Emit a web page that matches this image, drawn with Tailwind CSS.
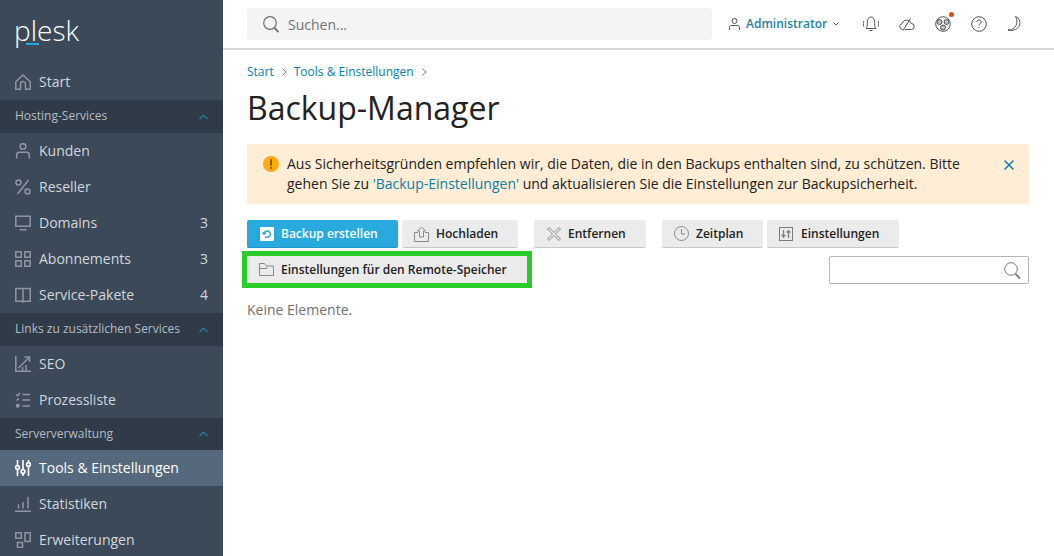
<!DOCTYPE html>
<html lang="de">
<head>
  <meta charset="UTF-8">
  <title>Backup-Manager</title>
  <script src="https://cdn.jsdelivr.net/npm/@tailwindcss/browser@4"></script>
</head>
<body class="font-['Open_Sans',sans-serif] text-[#222] bg-white">
  <div class="flex h-[556px] w-[1054px] overflow-hidden">

    <!-- sidebar -->
    <aside class="w-[223px] shrink-0 bg-[#3b4959] text-[#d3d7dc] text-[14px]">
      <div class="h-[64px] pl-[14px] relative">
        <span class="absolute left-[14px] top-[11px] text-[28px] leading-[38px] font-light text-white">plesk</span>
        <span class="absolute left-[26px] top-[43px] w-[13px] h-[2px] bg-[#28aade]"></span>
      </div>

      <div class="h-[36px] pl-[15px] pr-[15px] flex items-center gap-[8px]">
        <svg class="w-[16px] h-[16px] text-[#8d98a4]" viewBox="0 0 16 16" fill="none" stroke="currentColor" stroke-width="1.500"><path d="M.8 7.800 8 1l7.200 6.800V15.300H10.500V10a2.500 2.500 0 0 0-5 0v5.300H.8z"/></svg>
        <span class="pb-[2px]">Start</span>
      </div>

      <div class="h-[33px] pl-[15px] pr-[15px] flex items-center justify-between bg-[#2f3b48] text-[12px] text-[#b5bcc4]">
        <span class="pb-[2px]">Hosting-Services</span>
        <svg class="w-[9px] h-[6px] text-[#28aade]" viewBox="0 0 9 6" fill="none" stroke="currentColor"><path d="M.5 5 4.500 1l4 4"/></svg>
      </div>

      <div class="h-[36px] pl-[15px] pr-[15px] flex items-center gap-[8px]">
        <svg class="w-[16px] h-[16px] text-[#8d98a4]" viewBox="0 0 16 16" fill="none" stroke="currentColor" stroke-width="1.500"><circle cx="8" cy="3.500" r="2.800"/><path d="M1.700 15.500V12c0-1.500 1-2.700 2.800-2.700h7c1.800 0 2.800 1.200 2.800 2.700v3.500"/></svg>
        <span class="pb-[2px]">Kunden</span>
      </div>
      <div class="h-[36px] pl-[15px] pr-[15px] flex items-center gap-[8px]">
        <svg class="w-[16px] h-[16px] text-[#8d98a4]" viewBox="0 0 16 16" fill="none" stroke="currentColor" stroke-width="1.500"><circle cx="3.500" cy="3.500" r="2.500"/><circle cx="12.500" cy="12.500" r="2.500"/><path d="M13.500 1 2.500 15"/></svg>
        <span class="pb-[2px]">Reseller</span>
      </div>
      <div class="h-[36px] pl-[15px] pr-[15px] flex items-center gap-[8px]">
        <svg class="w-[16px] h-[16px] text-[#8d98a4]" viewBox="0 0 16 16" fill="none" stroke="currentColor" stroke-width="1.500"><rect x=".8" y="1.200" width="14.400" height="10"/><path d="M4.500 14.800h7"/></svg>
        <span class="flex-1 pb-[2px]">Domains</span><span class="pb-[2px]">3</span>
      </div>
      <div class="h-[36px] pl-[15px] pr-[15px] flex items-center gap-[8px]">
        <svg class="w-[16px] h-[16px] text-[#8d98a4]" viewBox="0 0 16 16" fill="none" stroke="currentColor" stroke-width="1.500"><rect x=".8" y=".8" width="5.400" height="5.400"/><rect x="9.800" y=".8" width="5.400" height="5.400"/><rect x=".8" y="9.800" width="5.400" height="5.400"/><rect x="9.800" y="9.800" width="5.400" height="5.400"/></svg>
        <span class="flex-1 pb-[2px]">Abonnements</span><span class="pb-[2px]">3</span>
      </div>
      <div class="h-[36px] pl-[15px] pr-[15px] flex items-center gap-[8px]">
        <svg class="w-[16px] h-[16px] text-[#8d98a4]" viewBox="0 0 16 16" fill="none" stroke="currentColor" stroke-width="1.500"><path d="M8 1.500H.8v12.800H8zM8 1.500h7.200v12.800H8zM8 14.300v1.500"/></svg>
        <span class="flex-1 pb-[2px]">Service-Pakete</span><span class="pb-[2px]">4</span>
      </div>

      <div class="h-[33px] pl-[15px] pr-[15px] flex items-center justify-between bg-[#2f3b48] text-[12px] text-[#b5bcc4]">
        <span class="pb-[2px]">Links zu zusätzlichen Services</span>
        <svg class="w-[9px] h-[6px] text-[#28aade]" viewBox="0 0 9 6" fill="none" stroke="currentColor"><path d="M.5 5 4.500 1l4 4"/></svg>
      </div>

      <div class="h-[36px] pl-[15px] pr-[15px] flex items-center gap-[8px]">
        <svg class="w-[16px] h-[16px] text-[#8d98a4]" viewBox="0 0 16 16" fill="none" stroke="currentColor" stroke-width="1.500"><path d="M.8 0v15.200H16M3.500 12 14 1.500M9.500 1H14.500V6M7.500 15v-4M11 15v-6"/></svg>
        <span class="pb-[2px]">SEO</span>
      </div>
      <div class="h-[36px] pl-[15px] pr-[15px] flex items-center gap-[8px]">
        <svg class="w-[16px] h-[16px] text-[#8d98a4]" viewBox="0 0 16 16" fill="none" stroke="currentColor" stroke-width="1.500"><path d="m1 2.500 1.500 1.300L5 1M7.500 2.500H15M7.500 8H15M7.500 14H15M1.500 8.500 4 6.500"/><circle cx="2.800" cy="13.800" r="1.300" fill="currentColor"/></svg>
        <span class="pb-[2px]">Prozessliste</span>
      </div>

      <div class="h-[32px] pl-[15px] pr-[15px] flex items-center justify-between bg-[#2f3b48] text-[12px] text-[#b5bcc4]">
        <span>Serververwaltung</span>
        <svg class="w-[9px] h-[6px] text-[#28aade]" viewBox="0 0 9 6" fill="none" stroke="currentColor"><path d="M.5 5 4.500 1l4 4"/></svg>
      </div>

      <div class="h-[36px] pl-[15px] pr-[15px] flex items-center gap-[8px] bg-[#56697c] text-white">
        <svg class="w-[16px] h-[16px]" viewBox="0 0 16 16" fill="none" stroke="currentColor" stroke-width="1.600"><path d="M2.500 0v5M2.500 10v6M8 0v9M8 14v2M13.500 0v2M13.500 7v9"/><circle cx="2.500" cy="7.500" r="1.900"/><circle cx="8" cy="11.500" r="1.900"/><circle cx="13.500" cy="4.500" r="1.900"/></svg>
        <span class="pb-[2px]">Tools &amp; Einstellungen</span>
      </div>
      <div class="h-[36px] pl-[15px] pr-[15px] flex items-center gap-[8px]">
        <svg class="w-[16px] h-[16px] text-[#8d98a4]" viewBox="0 0 16 16" fill="none" stroke="currentColor" stroke-width="1.500"><path d="M0 15.300h16M3.500 12.500V8.500M8 12.500V6M13 12.500V1"/></svg>
        <span class="pb-[2px]">Statistiken</span>
      </div>
      <div class="h-[36px] pl-[15px] pr-[15px] flex items-center gap-[8px]">
        <svg class="w-[16px] h-[16px] text-[#8d98a4]" viewBox="0 0 16 16" fill="none" stroke="currentColor" stroke-width="1.500"><rect x=".8" y=".8" width="5.400" height="5.400"/><rect x="10" y=".8" width="5.200" height="8.600"/><rect x="2.500" y="10.500" width="5" height="5"/></svg>
        <span class="pb-[2px]">Erweiterungen</span>
      </div>
    </aside>

    <!-- main -->
    <main class="flex-1 min-w-0">
      <header class="h-[50px] border-b-2 border-[#d8d8d8] pl-[24px] pr-[28px] flex items-center">
        <div class="w-[465px] h-[32px] rounded-[4px] bg-[#f4f4f4] flex items-center pl-[16px] gap-[9px] text-[14px] text-[#737373]">
          <svg class="w-[16px] h-[17px] text-[#707070]" viewBox="0 0 16 17" fill="none" stroke="currentColor" stroke-width="1.200"><circle cx="7" cy="7" r="6.300"/><path d="m11.500 12 4 4" stroke-width="1.800"/></svg>
          <span>Suchen...</span>
        </div>
        <div class="ml-[17px] flex items-center">
          <svg class="w-[11px] h-[12px] text-[#555]" viewBox="0 0 11 12" fill="none" stroke="currentColor"><circle cx="5.500" cy="3" r="2.500"/><path d="M.5 12V9.500c0-1 .8-2 2-2h6c1.200 0 2 1 2 2V12"/></svg>
          <span class="ml-[6px] text-[12px] font-semibold text-[#28819f]">Administrator</span>
          <svg class="ml-[6px] w-[6px] h-[4px] text-[#555]" viewBox="0 0 6 4" fill="none" stroke="currentColor"><path d="m.5.5 2.500 2.500L5.500.5"/></svg>
        </div>
        <div class="ml-[24px] flex items-center gap-[20px] text-[#555]">
          <svg class="w-[16px] h-[16px]" viewBox="0 0 16 16" fill="none" stroke="currentColor"><path d="M3 12.500c1-1 1.300-2 1.300-6C4.300 3 6 1 8 1s3.700 2 3.700 5.500c0 4 .3 5 1.300 6zM6.500 14.500h3M.8 5c-.8 2-.8 3.500 0 5.500M15.200 5c.8 2 .8 3.500 0 5.500"/></svg>
          <svg class="w-[16px] h-[13px]" viewBox="0 0 16 13" fill="none" stroke="currentColor"><path d="M5 11.500H3.500a3 3 0 0 1-.5-5.900C3.500 3.500 5.500 2 7.500 2c2.500 0 4 1.500 4.500 3.500a3 3 0 0 1 .5 6H6M11.500.5 4 12.500"/></svg>
          <div class="relative">
            <svg class="w-[16px] h-[16px]" viewBox="0 0 16 16" fill="none" stroke="currentColor"><circle cx="8" cy="8" r="7.300"/><circle cx="4.500" cy="6" r="2.500" fill="#bbb"/><circle cx="11.500" cy="6" r="2.500" fill="#bbb"/><circle cx="8" cy="11.500" r="2.500" fill="#bbb"/></svg>
            <span class="absolute -top-[4px] right-[-3px] w-[5px] h-[5px] rounded-full bg-[#d4500f]"></span>
          </div>
          <svg class="w-[16px] h-[16px]" viewBox="0 0 16 16" fill="none" stroke="currentColor"><circle cx="8" cy="8" r="7.300"/><path d="M5.800 6.200c0-1.300 1-2.200 2.200-2.200s2.200.8 2.200 2c0 1.800-2.200 1.800-2.200 3.500M8 11v1.200"/></svg>
          <svg class="w-[14px] h-[16px]" viewBox="0 0 14 16" fill="none" stroke="currentColor"><path d="M8.500.5c4 1.500 5 5.500 4 8.500-1.200 4-6 6.500-11.500 5 3.500 0 6.500-1.500 8-4.500S10 3 8.500.5z"/></svg>
        </div>
      </header>

      <div class="pl-[24px] pr-[25px]">
        <nav class="mt-[12px] h-[20px] flex items-center text-[12px] text-[#0b7fa8]">
          <span>Start</span>
          <svg class="ml-[8px] mr-[7px] w-[5px] h-[8px] text-[#777]" viewBox="0 0 5 8" fill="none" stroke="currentColor"><path d="m.5.5 3.500 3.500L.5 7.500"/></svg>
          <span>Tools &amp; Einstellungen</span>
          <svg class="mx-[8px] w-[5px] h-[8px] text-[#777]" viewBox="0 0 5 8" fill="none" stroke="currentColor"><path d="m.5.5 3.500 3.500L.5 7.500"/></svg>
        </nav>
        <h1 class="mt-[4px] text-[32px] leading-[44px] text-[#222]">Backup-Manager</h1>

        <div class="mt-[14px] h-[60px] rounded-[2px] bg-[#ffedd5] pl-[16px] pr-[15px] flex items-start">
          <svg class="mt-[12px] w-[16px] h-[16px] shrink-0" viewBox="0 0 16 16"><circle cx="8" cy="8" r="8" fill="#fdab0d"/><rect x="7.200" y="3.200" width="1.700" height="6.500" fill="#7a4a00"/><rect x="7.200" y="11" width="1.700" height="1.800" fill="#7a4a00"/></svg>
          <p class="ml-[8px] mt-[10px] flex-1 text-[14px] leading-[20px] text-[#222]">Aus Sicherheitsgründen empfehlen wir, die Daten, die in den Backups enthalten sind, zu schützen. Bitte gehen Sie zu <span class="text-[#0b7fa8]">'Backup-Einstellungen'</span> und aktualisieren Sie die Einstellungen zur Backupsicherheit.</p>
          <svg class="mt-[16px] ml-[18px] w-[10px] h-[10px] text-[#0b7fa8] shrink-0" viewBox="0 0 10 10" fill="none" stroke="currentColor" stroke-width="1.500"><path d="m.5.5 9 9M9.500.5l-9 9"/></svg>
        </div>

        <!-- toolbar -->
        <div class="mt-[16px] flex text-[12px] font-semibold">
          <div class="h-[28px] w-[151px] rounded-[2px] bg-[#28aade] border-b border-[#1f96c6] text-white flex items-center pl-[13px] gap-[7px]">
            <svg class="w-[14px] h-[14px]" viewBox="0 0 14 14"><rect width="14" height="14" rx="1" fill="#fff"/><path d="M4 7a3.200 3.200 0 1 1 1.200 2.600M2.500 5.500 4 7.200 5.800 5.800" fill="none" stroke="#28aade" stroke-width="1.500"/></svg>
            <span>Backup erstellen</span>
          </div>
          <div class="ml-[4px] h-[28px] w-[116px] rounded-[2px] bg-[#ebebeb] border-b border-[#c8c8c8] flex items-center pl-[12px] gap-[7px]">
            <svg class="w-[15px] h-[16px] text-[#8a8a8a]" viewBox="0 0 15 16" fill="none" stroke="currentColor"><path d="M4 6.500H.5v9h14v-9H11M5.500 11V5H3.500l4-4 4 4H9.500v6z"/></svg>
            <span>Hochladen</span>
          </div>
          <div class="ml-[16px] h-[28px] w-[112px] rounded-[2px] bg-[#ebebeb] border-b border-[#c8c8c8] flex items-center pl-[13px] gap-[7px]">
            <svg class="w-[14px] h-[14px] text-[#8a8a8a]" viewBox="0 0 14 14" fill="none" stroke="currentColor"><path d="M2 .5 7 5.500l5-5L13.500 2l-5 5 5 5-1.500 1.500-5-5-5 5L.5 12l5-5-5-5z"/></svg>
            <span>Entfernen</span>
          </div>
          <div class="ml-[16px] h-[28px] w-[101px] rounded-[2px] bg-[#ebebeb] border-b border-[#c8c8c8] flex items-center pl-[12px] gap-[7px]">
            <svg class="w-[15px] h-[15px] text-[#8a8a8a]" viewBox="0 0 15 15" fill="none" stroke="currentColor"><circle cx="7.500" cy="7.500" r="7"/><path d="M7.500 3v5H11"/></svg>
            <span>Zeitplan</span>
          </div>
          <div class="ml-[4px] h-[28px] w-[132px] rounded-[2px] bg-[#ebebeb] border-b border-[#c8c8c8] flex items-center pl-[12px] gap-[8px]">
            <svg class="w-[14px] h-[14px] text-[#7a7a7a]" viewBox="0 0 14 14" fill="none" stroke="currentColor"><rect x=".5" y=".5" width="13" height="13"/><path d="M4.500 3v8M9.500 3v8M2.500 8.500h4M7.500 5h4" stroke-width="1.300"/></svg>
            <span>Einstellungen</span>
          </div>
        </div>

        <div class="mt-[3px] flex items-start justify-between">
          <div class="-ml-[5px] border-[5px] border-[#29cc29]">
            <div class="h-[27px] w-[280px] bg-[#ebebeb] flex items-center pl-[12px] gap-[7px] text-[12px] font-semibold">
              <svg class="w-[15px] h-[13px] text-[#8a8a8a]" viewBox="0 0 15 13" fill="none" stroke="currentColor"><path d="M.5 12.500V.5h5l2 2.500h7v9.500zM.5 5.500h7l1-2"/></svg>
              <span>Einstellungen für den Remote-Speicher</span>
            </div>
          </div>
          <div class="mt-[5px] w-[200px] h-[28px] rounded-[2px] border border-[#b5b5b5] flex items-center justify-end pr-[7px]">
            <svg class="w-[17px] h-[17px] text-[#777]" viewBox="0 0 17 17" fill="none" stroke="currentColor"><circle cx="7" cy="7" r="6.300"/><path d="m11.500 12 4.500 4.500" stroke-width="1.800"/></svg>
          </div>
        </div>

        <p class="mt-[12px] text-[14px] leading-[20px] text-[#74706c]">Keine Elemente.</p>
      </div>
    </main>
  </div>
</body>
</html>
